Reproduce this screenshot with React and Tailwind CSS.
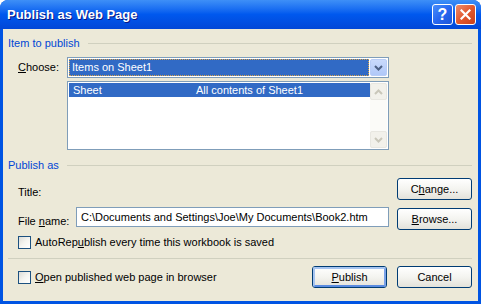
import React from "react";

const font = { fontFamily: '"Liberation Sans", Arial, sans-serif' };

function XPButton({ children, isDefault, className = "" }) {
  return (
    <div
      className={`w-[75px] h-[22px] rounded-[3px] border border-[#003C74] bg-gradient-to-b from-[#FFFFFF] via-[#F4F4F0] to-[#E3E2DA] flex items-center justify-center text-[11px] text-black ${className}`}
    >
      <div
        className={`w-full h-full rounded-[2px] flex items-center justify-center ${
          isDefault ? "border-2 border-[#A6C4F0] border-b-[#5A8BE0] border-r-[#7AA2E8]" : ""
        }`}
      >
        {children}
      </div>
    </div>
  );
}

function CheckBox() {
  return (
    <div className="w-[13px] h-[13px] border border-[#1C5180] bg-gradient-to-br from-[#DCDCD7] via-[#F4F4F0] to-[#FFFFFF] shrink-0" />
  );
}

function Header({ label }) {
  return (
    <div className="flex items-center h-[13px] pl-[5px] pr-[6px]">
      <span className="text-[#0046D5] text-[11px] leading-[13px] whitespace-nowrap">{label}</span>
      <div className="flex-1 h-px bg-[#D0D0BF] ml-[8px]" />
    </div>
  );
}

export default function App() {
  return (
    <div className="w-[481px] h-[304px] overflow-hidden" style={font}>
      <div className="w-[481px] h-[304px] rounded-t-[8px] bg-[#0054E3] flex flex-col">
        {/* Title bar */}
        <div className="h-[29px] shrink-0 rounded-t-[8px] bg-gradient-to-b from-[#3E8FF7] via-[#0058EE] to-[#0247D7] flex items-center pl-[7px] pr-[5px]">
          <span
            className="text-white font-bold text-[13px] flex-1 mt-[1px]"
            style={{ textShadow: "1px 1px 0 #0A1883" }}
          >
            Publish as Web Page
          </span>
          <div className="w-[21px] h-[21px] rounded-[3px] border border-white bg-gradient-to-br from-[#4A8EFA] via-[#2767F0] to-[#1D55D8] flex items-center justify-center text-white font-bold text-[16px] leading-none">
            ?
          </div>
          <div className="w-[21px] h-[21px] ml-[2px] rounded-[3px] border border-white bg-gradient-to-br from-[#EC8C6C] via-[#E2582E] to-[#C9401A] flex items-center justify-center">
            <svg width="11" height="11" viewBox="0 0 11 11">
              <path d="M1.5 1.5 L9.5 9.5 M9.5 1.5 L1.5 9.5" stroke="white" strokeWidth="2.2" strokeLinecap="square" />
            </svg>
          </div>
        </div>
        {/* Client */}
        <div className="mx-[3px] mr-[3px] h-[272px] bg-[#ECE9D8] flex flex-col text-[11px] text-black">
          <div className="mt-[8px]">
            <Header label="Item to publish" />
          </div>
          {/* Choose */}
          <div className="mt-[7px] flex items-center pl-[15px]">
            <span className="w-[49px] leading-[13px]">
              <span className="underline">C</span>hoose:
            </span>
            <div className="w-[322px] h-[21px] border border-[#7F9DB9] bg-white flex items-center p-[1px]">
              <div className="flex-1 h-full bg-[#316AC5] border border-dotted border-[#D6A24A] text-white flex items-center pl-[2px] leading-none">
                Items on Sheet1
              </div>
              <div className="w-[17px] h-full ml-[1px] rounded-[2px] border border-[#B9CDF6] bg-gradient-to-b from-[#C9DAFC] to-[#B0C8F8] flex items-center justify-center">
                <svg width="9" height="6" viewBox="0 0 9 6">
                  <path d="M1 1 L4.5 4.5 L8 1" stroke="#4D6185" strokeWidth="2" fill="none" />
                </svg>
              </div>
            </div>
          </div>
          {/* List */}
          <div className="mt-[3px] ml-[64px] w-[322px] h-[69px] border border-[#7F9DB9] bg-white flex p-[1px]">
            <div className="flex-1 flex flex-col">
              <div className="h-[14px] bg-[#316AC5] text-white flex items-center leading-none">
                <span className="w-[127px] pl-[4px]">Sheet</span>
                <span>All contents of Sheet1</span>
              </div>
            </div>
            <div className="w-[17px] bg-[#FBFBF8] flex flex-col justify-between">
              <div className="w-[17px] h-[17px] rounded-[2px] border border-[#E8E7E1] bg-[#F2F1EB] flex items-center justify-center">
                <svg width="9" height="6" viewBox="0 0 9 6">
                  <path d="M1 5 L4.5 1.5 L8 5" stroke="#C9C7BA" strokeWidth="2" fill="none" />
                </svg>
              </div>
              <div className="w-[17px] h-[17px] rounded-[2px] border border-[#E8E7E1] bg-[#F2F1EB] flex items-center justify-center">
                <svg width="9" height="6" viewBox="0 0 9 6">
                  <path d="M1 1 L4.5 4.5 L8 1" stroke="#C9C7BA" strokeWidth="2" fill="none" />
                </svg>
              </div>
            </div>
          </div>
          <div className="mt-[9px]">
            <Header label="Publish as" />
          </div>
          {/* Title row */}
          <div className="mt-[6px] flex items-center pl-[15px] pr-[6px] h-[22px]">
            <span className="flex-1 mt-[6px]">Title:</span>
            <XPButton>
              <span>
                C<span className="underline">h</span>ange...
              </span>
            </XPButton>
          </div>
          {/* File name row */}
          <div className="mt-[7px] flex items-start pl-[15px] pr-[6px]">
            <span className="w-[58px] mt-[6px]">
              File <span className="underline">n</span>ame:
            </span>
            <div className="w-[313px] h-[20px] border border-[#7F9DB9] bg-white flex items-center pl-[4px] leading-none">
              C:\Documents and Settings\Joe\My Documents\Book2.htm
            </div>
            <div className="flex-1" />
            <XPButton className="mt-[1px]">
              <span>
                <span className="underline">B</span>rowse...
              </span>
            </XPButton>
          </div>
          {/* AutoRepublish */}
          <div className="mt-[6px] flex items-center pl-[15px] h-[13px]">
            <CheckBox />
            <span className="ml-[4px]">
              AutoRep<span className="underline">u</span>blish every time this workbook is saved
            </span>
          </div>
          {/* separator */}
          <div className="mt-[9px] ml-[5px] mr-[6px] h-px bg-[#D0D0BF]" />
          {/* bottom row */}
          <div className="mt-[7px] flex items-center pl-[15px] pr-[6px] h-[22px]">
            <CheckBox />
            <span className="ml-[4px] flex-1">
              <span className="underline">O</span>pen published web page in browser
            </span>
            <XPButton isDefault>
              <span>
                <span className="underline">P</span>ublish
              </span>
            </XPButton>
            <XPButton className="ml-[10px]">Cancel</XPButton>
          </div>
        </div>
      </div>
    </div>
  );
}
